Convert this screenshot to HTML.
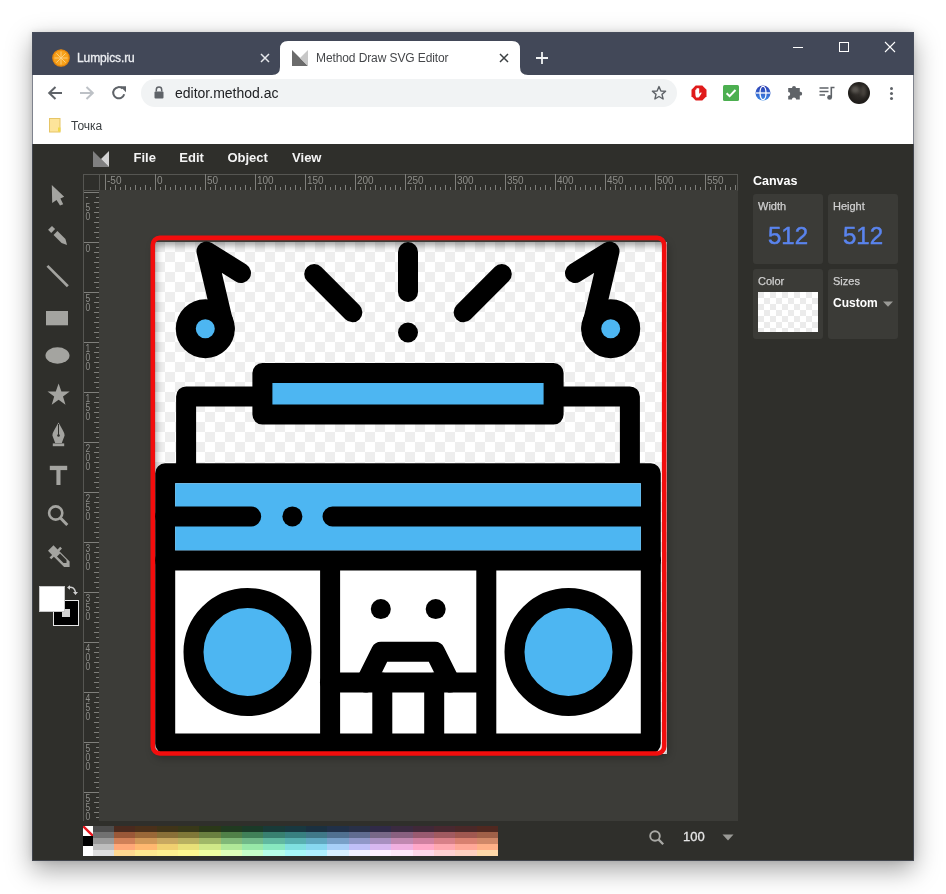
<!DOCTYPE html>
<html><head><meta charset="utf-8">
<style>
*{box-sizing:border-box;margin:0;padding:0}
html,body{width:946px;height:894px;overflow:hidden;background:#fff;will-change:transform;font-family:"Liberation Sans",sans-serif}
.a{position:absolute}
#win{left:32px;top:32px;width:882px;height:829px;background:#2f2f2b;box-shadow:0 9px 24px rgba(0,0,0,0.36),0 0 6px rgba(0,0,0,0.1)}
#title{left:32px;top:32px;width:882px;height:43px;background:#424858}
#toolbar{left:32px;top:75px;width:882px;height:69px;background:#fff}
.tt{font-size:12px;white-space:nowrap;line-height:14px}
#editor{left:33px;top:144px;width:880px;height:717px;background:#2f2f2b}
.menu{font-size:13px;font-weight:bold;color:#f4f4f4;top:151px;line-height:14px}
#work{left:99px;top:190px;width:639px;height:631px;background:#3c3c38}
.box{background:#3b3b37;border-radius:3px;width:70px;height:70px}
.lbl{font-size:11px;color:#d0d0d0;line-height:12px;-webkit-text-stroke:0.25px #d0d0d0}
.big{font-size:24px;color:#5a84ee;line-height:26px;-webkit-text-stroke:0.5px #5a84ee}
</style></head><body>
<div id="win" class="a"></div>
<div id="title" class="a"></div>
<div id="toolbar" class="a"></div>
<!-- favicon lumpics -->
<svg class="a" style="left:52px;top:49px" width="18" height="18" viewBox="0 0 18 18">
<circle cx="9" cy="9" r="8.2" fill="#f7a21b" stroke="#e8870c" stroke-width="1.2"/>
<g stroke="#fbd38a" stroke-width="0.9"><line x1="9" y1="2.5" x2="9" y2="15.5"/><line x1="2.5" y1="9" x2="15.5" y2="9"/><line x1="4.4" y1="4.4" x2="13.6" y2="13.6"/><line x1="13.6" y1="4.4" x2="4.4" y2="13.6"/></g>
</svg>
<div class="a tt" style="left:77px;top:51px;color:#eceef2;-webkit-text-stroke:0.3px #eceef2;letter-spacing:-0.1px">Lumpics.ru</div>
<svg class="a" style="left:260px;top:53px" width="10" height="10" viewBox="0 0 10 10"><path d="M1 1L9 9M9 1L1 9" stroke="#e6e8ec" stroke-width="1.5"/></svg>
<!-- active tab -->
<svg class="a" style="left:272px;top:41px" width="256" height="34" viewBox="0 0 256 34">
<path d="M0 34 Q8 34 8 26 L8 8 Q8 0 16 0 L240 0 Q248 0 248 8 L248 26 Q248 34 256 34 Z" fill="#fff"/>
</svg>
<svg class="a" style="left:292px;top:50px" width="16" height="16" viewBox="0 0 16 16">
<path d="M0 0 L16 16 L0 16 Z" fill="#6b6b6b"/><path d="M16 0 L16 16 L8 8 Z" fill="#c8c8c8"/>
</svg>
<div class="a tt" style="left:316px;top:51px;color:#45474a;letter-spacing:-0.1px">Method Draw SVG Editor</div>
<svg class="a" style="left:499px;top:53px" width="10" height="10" viewBox="0 0 10 10"><path d="M1 1L9 9M9 1L1 9" stroke="#3c4043" stroke-width="1.5"/></svg>
<svg class="a" style="left:535px;top:51px" width="14" height="14" viewBox="0 0 14 14"><path d="M7 1V13M1 7H13" stroke="#f1f3f4" stroke-width="1.8"/></svg>

<!-- nav -->
<svg class="a" style="left:47px;top:85px" width="16" height="16" viewBox="0 0 16 16"><path d="M15 8H2.5M8.5 2L2.2 8L8.5 14" fill="none" stroke="#5f6368" stroke-width="2"/></svg>
<svg class="a" style="left:79px;top:85px" width="16" height="16" viewBox="0 0 16 16"><path d="M1 8H13.5M7.5 2L13.8 8L7.5 14" fill="none" stroke="#bdc1c6" stroke-width="2"/></svg>
<svg class="a" style="left:111px;top:85px" width="16" height="16" viewBox="0 0 16 16"><path d="M13.2 9.2A5.6 5.6 0 1 1 11.6 3.6" fill="none" stroke="#5f6368" stroke-width="2"/><path d="M9 1.2H15V7.2Z" fill="#5f6368"/></svg>
<div class="a" style="left:141px;top:79px;width:536px;height:28px;border-radius:14px;background:#f1f3f4"></div>
<svg class="a" style="left:154px;top:86px" width="10" height="13" viewBox="0 0 10 13"><path d="M2.3 5.5V3.8A2.7 2.7 0 0 1 7.7 3.8V5.5" fill="none" stroke="#5f6368" stroke-width="1.5"/><rect x="0.5" y="5.5" width="9" height="7" rx="1" fill="#5f6368"/></svg>
<div class="a" style="left:175px;top:85px;font-size:14px;line-height:16px;color:#202124">editor.method.ac</div>
<svg class="a" style="left:651px;top:85px" width="16" height="16" viewBox="0 0 16 16"><path d="M8 1.6L9.9 6L14.6 6.3L11 9.4L12.1 14L8 11.5L3.9 14L5 9.4L1.4 6.3L6.1 6Z" fill="none" stroke="#5f6368" stroke-width="1.4" stroke-linejoin="round"/></svg>
<!-- extensions -->
<svg class="a" style="left:691px;top:85px" width="16" height="16" viewBox="0 0 16 16"><path d="M4.7 0.5H11.3L15.5 4.7V11.3L11.3 15.5H4.7L0.5 11.3V4.7Z" fill="#e01b1b"/><path d="M5.2 12.5C4.6 11.5 4.3 9.5 4.3 7.5V5.2C4.3 4.6 5.2 4.6 5.2 5.2V7.3V3.9C5.2 3.3 6.2 3.3 6.2 3.9V7V3.4C6.2 2.8 7.2 2.8 7.2 3.4V7V3.8C7.2 3.2 8.2 3.2 8.2 3.8V8.8L9.6 7.6C10.2 7.1 10.9 7.7 10.5 8.3L8.9 11C8.4 11.9 7.9 12.5 7 12.5Z" fill="#fff"/></svg>
<div class="a" style="left:723px;top:85px;width:16px;height:16px;background:#4caf50;border-radius:1.5px"></div>
<svg class="a" style="left:723px;top:85px" width="16" height="16" viewBox="0 0 16 16"><path d="M3.6 8.2L6.6 11.1L12.5 5" fill="none" stroke="#fff" stroke-width="2"/></svg>
<svg class="a" style="left:755px;top:85px" width="16" height="16" viewBox="0 0 16 16"><defs><linearGradient id="gg" x1="0" y1="0" x2="0" y2="1"><stop offset="0" stop-color="#2a3bb0"/><stop offset="1" stop-color="#3f8be8"/></linearGradient></defs><circle cx="8" cy="8" r="7.5" fill="url(#gg)"/><g fill="none" stroke="#fff" stroke-width="1.3"><ellipse cx="8" cy="8" rx="3" ry="6.6"/><path d="M1 8H15"/></g></svg>
<svg class="a" style="left:787px;top:85px" width="16" height="16" viewBox="0 0 16 16"><path d="M1.2 3.1H5A2 2 0 1 1 9 3.1H12.8V6.8A1.9 1.9 0 1 1 12.8 10.5V14.5H9.1A2.1 2.1 0 0 0 4.9 14.5H1.2V10.9A2 2 0 0 0 1.2 6.9Z" fill="#5f6368"/></svg>
<svg class="a" style="left:819px;top:85px" width="16" height="16" viewBox="0 0 16 16"><g stroke="#5f6368" stroke-width="1.6" fill="none"><path d="M0.5 3H9.5M0.5 6.5H9.5M0.5 10H6"/><path d="M12.3 12.5V2.5H15.5"/></g><circle cx="10.6" cy="12.4" r="2.4" fill="#5f6368"/></svg>
<div class="a" style="left:848px;top:82px;width:22px;height:22px;border-radius:50%;overflow:hidden;background:radial-gradient(circle at 50% 45%,#3a3632 0%,#221f1c 60%,#100f0e 100%)"><div style="position:absolute;left:3px;top:4px;width:8px;height:7px;border-radius:50%;background:#6e6a64;opacity:0.7;filter:blur(1.5px)"></div><div style="position:absolute;left:13px;top:3px;width:5px;height:12px;border-radius:50%;background:#55504a;opacity:0.7;filter:blur(1.5px)"></div></div>
<div class="a" style="left:889.5px;top:86.5px;width:3.6px;height:3.6px;border-radius:50%;background:#5f6368;box-shadow:0 5px 0 #5f6368,0 10px 0 #5f6368"></div>
<!-- bookmarks -->
<svg class="a" style="left:48px;top:117px" width="14" height="16" viewBox="0 0 14 16"><rect x="1.5" y="1.5" width="10.5" height="13.5" fill="#fde49a" stroke="#e6c566" stroke-width="1"/><rect x="10" y="10.5" width="2.5" height="4" fill="#f0d84a"/></svg>
<div class="a tt" style="left:71px;top:119px;color:#3c4043">Точка</div>
<!-- window controls -->
<div class="a" style="left:793px;top:47px;width:10px;height:1px;background:#fff"></div>
<div class="a" style="left:839px;top:42px;width:10px;height:10px;border:1px solid #fff"></div>
<svg class="a" style="left:884px;top:41px" width="12" height="12" viewBox="0 0 12 12"><path d="M1 1L11 11M11 1L1 11" stroke="#fff" stroke-width="1.1"/></svg>

<div id="editor" class="a"></div>
<div id="work" class="a"></div>
<!--EDITOR-->
<svg class="a" style="left:93px;top:151px" width="16" height="16" viewBox="0 0 16 16"><path d="M0 0L16 16H0Z" fill="#808080"/><path d="M16 0V16L8 8Z" fill="#d2d2d2"/></svg>
<div class="a menu" style="left:133.5px">File</div>
<div class="a menu" style="left:179.3px">Edit</div>
<div class="a menu" style="left:227.4px">Object</div>
<div class="a menu" style="left:292.1px">View</div>
<svg class="a" style="left:83px;top:174px" width="655" height="18" viewBox="0 0 655 18"><g stroke="#565652" stroke-width="1" fill="none"><path d="M0 0.5H655M0.5 0V18M16.5 0V16.5M654.5 0V16.5M1 16.5H16"/></g><g stroke="#7e7e7a" stroke-width="1"><path d="M22.5 0V16 M72.5 0V16 M122.5 0V16 M172.5 0V16 M222.5 0V16 M272.5 0V16 M322.5 0V16 M372.5 0V16 M422.5 0V16 M472.5 0V16 M522.5 0V16 M572.5 0V16 M622.5 0V16 M27.5 13V16 M32.5 11V16 M37.5 13V16 M42.5 11V16 M47.5 13V16 M52.5 11V16 M57.5 13V16 M62.5 11V16 M67.5 13V16 M77.5 13V16 M82.5 11V16 M87.5 13V16 M92.5 11V16 M97.5 13V16 M102.5 11V16 M107.5 13V16 M112.5 11V16 M117.5 13V16 M127.5 13V16 M132.5 11V16 M137.5 13V16 M142.5 11V16 M147.5 13V16 M152.5 11V16 M157.5 13V16 M162.5 11V16 M167.5 13V16 M177.5 13V16 M182.5 11V16 M187.5 13V16 M192.5 11V16 M197.5 13V16 M202.5 11V16 M207.5 13V16 M212.5 11V16 M217.5 13V16 M227.5 13V16 M232.5 11V16 M237.5 13V16 M242.5 11V16 M247.5 13V16 M252.5 11V16 M257.5 13V16 M262.5 11V16 M267.5 13V16 M277.5 13V16 M282.5 11V16 M287.5 13V16 M292.5 11V16 M297.5 13V16 M302.5 11V16 M307.5 13V16 M312.5 11V16 M317.5 13V16 M327.5 13V16 M332.5 11V16 M337.5 13V16 M342.5 11V16 M347.5 13V16 M352.5 11V16 M357.5 13V16 M362.5 11V16 M367.5 13V16 M377.5 13V16 M382.5 11V16 M387.5 13V16 M392.5 11V16 M397.5 13V16 M402.5 11V16 M407.5 13V16 M412.5 11V16 M417.5 13V16 M427.5 13V16 M432.5 11V16 M437.5 13V16 M442.5 11V16 M447.5 13V16 M452.5 11V16 M457.5 13V16 M462.5 11V16 M467.5 13V16 M477.5 13V16 M482.5 11V16 M487.5 13V16 M492.5 11V16 M497.5 13V16 M502.5 11V16 M507.5 13V16 M512.5 11V16 M517.5 13V16 M527.5 13V16 M532.5 11V16 M537.5 13V16 M542.5 11V16 M547.5 13V16 M552.5 11V16 M557.5 13V16 M562.5 11V16 M567.5 13V16 M577.5 13V16 M582.5 11V16 M587.5 13V16 M592.5 11V16 M597.5 13V16 M602.5 11V16 M607.5 13V16 M612.5 11V16 M617.5 13V16 M627.5 13V16 M632.5 11V16 M637.5 13V16 M642.5 11V16 M647.5 13V16 M652.5 11V16"/></g><g fill="#8e8e8a" font-size="10" font-family="Liberation Sans"><text x="24.0" y="9.6">-50</text><text x="74.0" y="9.6">0</text><text x="124.0" y="9.6">50</text><text x="174.0" y="9.6">100</text><text x="224.0" y="9.6">150</text><text x="274.0" y="9.6">200</text><text x="324.0" y="9.6">250</text><text x="374.0" y="9.6">300</text><text x="424.0" y="9.6">350</text><text x="474.0" y="9.6">400</text><text x="524.0" y="9.6">450</text><text x="574.0" y="9.6">500</text><text x="624.0" y="9.6">550</text></g></svg>
<svg class="a" style="left:83px;top:190px" width="17" height="631" viewBox="0 0 17 631"><g stroke="#565652" stroke-width="1" fill="none"><path d="M0.5 0V631"/></g><g stroke="#7e7e7a" stroke-width="1"><path d="M1 2.5H16 M1 52.5H16 M1 102.5H16 M1 152.5H16 M1 202.5H16 M1 252.5H16 M1 302.5H16 M1 352.5H16 M1 402.5H16 M1 452.5H16 M1 502.5H16 M1 552.5H16 M1 602.5H16 M13 7.5H16 M11 12.5H16 M13 17.5H16 M11 22.5H16 M13 27.5H16 M11 32.5H16 M13 37.5H16 M11 42.5H16 M13 47.5H16 M13 57.5H16 M11 62.5H16 M13 67.5H16 M11 72.5H16 M13 77.5H16 M11 82.5H16 M13 87.5H16 M11 92.5H16 M13 97.5H16 M13 107.5H16 M11 112.5H16 M13 117.5H16 M11 122.5H16 M13 127.5H16 M11 132.5H16 M13 137.5H16 M11 142.5H16 M13 147.5H16 M13 157.5H16 M11 162.5H16 M13 167.5H16 M11 172.5H16 M13 177.5H16 M11 182.5H16 M13 187.5H16 M11 192.5H16 M13 197.5H16 M13 207.5H16 M11 212.5H16 M13 217.5H16 M11 222.5H16 M13 227.5H16 M11 232.5H16 M13 237.5H16 M11 242.5H16 M13 247.5H16 M13 257.5H16 M11 262.5H16 M13 267.5H16 M11 272.5H16 M13 277.5H16 M11 282.5H16 M13 287.5H16 M11 292.5H16 M13 297.5H16 M13 307.5H16 M11 312.5H16 M13 317.5H16 M11 322.5H16 M13 327.5H16 M11 332.5H16 M13 337.5H16 M11 342.5H16 M13 347.5H16 M13 357.5H16 M11 362.5H16 M13 367.5H16 M11 372.5H16 M13 377.5H16 M11 382.5H16 M13 387.5H16 M11 392.5H16 M13 397.5H16 M13 407.5H16 M11 412.5H16 M13 417.5H16 M11 422.5H16 M13 427.5H16 M11 432.5H16 M13 437.5H16 M11 442.5H16 M13 447.5H16 M13 457.5H16 M11 462.5H16 M13 467.5H16 M11 472.5H16 M13 477.5H16 M11 482.5H16 M13 487.5H16 M11 492.5H16 M13 497.5H16 M13 507.5H16 M11 512.5H16 M13 517.5H16 M11 522.5H16 M13 527.5H16 M11 532.5H16 M13 537.5H16 M11 542.5H16 M13 547.5H16 M13 557.5H16 M11 562.5H16 M13 567.5H16 M11 572.5H16 M13 577.5H16 M11 582.5H16 M13 587.5H16 M11 592.5H16 M13 597.5H16 M13 607.5H16 M11 612.5H16 M13 617.5H16 M11 622.5H16 M13 627.5H16"/></g><g fill="#8e8e8a" font-size="10" font-family="Liberation Sans"><text transform="translate(2.6 9.5) scale(0.85 1)">-</text><text transform="translate(2.6 20.7) scale(0.85 1)">5</text><text transform="translate(2.6 29.7) scale(0.85 1)">0</text><text transform="translate(2.6 61.7) scale(0.85 1)">0</text><text transform="translate(2.6 111.7) scale(0.85 1)">5</text><text transform="translate(2.6 120.7) scale(0.85 1)">0</text><text transform="translate(2.6 161.7) scale(0.85 1)">1</text><text transform="translate(2.6 170.7) scale(0.85 1)">0</text><text transform="translate(2.6 179.7) scale(0.85 1)">0</text><text transform="translate(2.6 211.7) scale(0.85 1)">1</text><text transform="translate(2.6 220.7) scale(0.85 1)">5</text><text transform="translate(2.6 229.7) scale(0.85 1)">0</text><text transform="translate(2.6 261.7) scale(0.85 1)">2</text><text transform="translate(2.6 270.7) scale(0.85 1)">0</text><text transform="translate(2.6 279.7) scale(0.85 1)">0</text><text transform="translate(2.6 311.7) scale(0.85 1)">2</text><text transform="translate(2.6 320.7) scale(0.85 1)">5</text><text transform="translate(2.6 329.7) scale(0.85 1)">0</text><text transform="translate(2.6 361.7) scale(0.85 1)">3</text><text transform="translate(2.6 370.7) scale(0.85 1)">0</text><text transform="translate(2.6 379.7) scale(0.85 1)">0</text><text transform="translate(2.6 411.7) scale(0.85 1)">3</text><text transform="translate(2.6 420.7) scale(0.85 1)">5</text><text transform="translate(2.6 429.7) scale(0.85 1)">0</text><text transform="translate(2.6 461.7) scale(0.85 1)">4</text><text transform="translate(2.6 470.7) scale(0.85 1)">0</text><text transform="translate(2.6 479.7) scale(0.85 1)">0</text><text transform="translate(2.6 511.7) scale(0.85 1)">4</text><text transform="translate(2.6 520.7) scale(0.85 1)">5</text><text transform="translate(2.6 529.7) scale(0.85 1)">0</text><text transform="translate(2.6 561.7) scale(0.85 1)">5</text><text transform="translate(2.6 570.7) scale(0.85 1)">0</text><text transform="translate(2.6 579.7) scale(0.85 1)">0</text><text transform="translate(2.6 611.7) scale(0.85 1)">5</text><text transform="translate(2.6 620.7) scale(0.85 1)">5</text><text transform="translate(2.6 629.7) scale(0.85 1)">0</text></g></svg>
<!-- tools -->
<svg class="a" style="left:40px;top:180px" width="36" height="420" viewBox="40 180 36 420">
<g fill="#a4a4a0">
<path d="M51.8 185.1L52.2 203.1L56.5 199.9L60 205.4L63.2 204.2L60.4 198.4L64.2 196.8Z"/>
<path d="M55.1 229L51.2 232.9L48.1 229.8L52 225.9Z"/>
<path d="M57.44 231.06L65.44 239.06L67.06 244.9L61.56 242.94L53.56 234.94Z"/>
<path d="M46.5 266.8L48.4 264.9L68.8 285.3L66.9 287.2Z"/>
<rect x="46" y="311" width="22" height="14.3"/>
<ellipse cx="57.5" cy="355.5" rx="12" ry="8.3"/>
<path d="M58.6 383.6L61.4 391.5H69.7L63 396.5L65.5 404.8L58.6 399.8L51.7 404.8L54.2 396.5L47.5 391.5H55.8Z"/>
<path d="M58.5 422.4L61 427C63 430.5 64.6 433 64.6 435.5L61.8 443H55.2L52.4 435.5C52.4 433 54 430.5 56 427Z"/>
<rect x="52.8" y="443.4" width="11.4" height="2.8"/>
<rect x="49.8" y="465.8" width="17.4" height="4.3"/>
<rect x="56.4" y="468" width="4.1" height="17"/>
</g>
<path d="M58.5 424V435" stroke="#2f2f2b" stroke-width="1"/>
<circle cx="58.5" cy="435.5" r="1.3" fill="#2f2f2b"/>
<g fill="none" stroke="#a4a4a0">
<circle cx="55.7" cy="513" r="6.6" stroke-width="2.6"/>
<path d="M60.5 518L67.3 525" stroke-width="3"/>
</g>
<g fill="#a4a4a0">
<path d="M49.5 549.3L53.5 545.3L57.6 549.4L60.2 546.8L62 548.6L59.4 551.2L69.6 561.4V566.9H64.1L53.9 556.7L51.3 559.3L49.5 557.5L52.1 554.9L48 550.8Z"/>
</g>
<path d="M57 556.5L63.5 563H66.5V560L60 553.5" fill="#2f2f2b"/>
</svg>
<!-- swatches -->
<div class="a" style="left:53px;top:600px;width:26px;height:26px;background:#000;border:1.5px solid #e8e8e8"></div>
<div class="a" style="left:62px;top:609px;width:8px;height:8px;background:#d4d4d4"></div>
<div class="a" style="left:39px;top:586px;width:26px;height:26px;background:#fff;border:1px solid #c8c8c8"></div>
<svg class="a" style="left:66px;top:584px" width="13" height="12" viewBox="0 0 13 12"><path d="M2.5 3.5Q8 2 9.5 8" fill="none" stroke="#cfcfcf" stroke-width="1.4"/><path d="M1 3.5L4 1.2V5.8Z M7 8H12L9.5 11Z" fill="#cfcfcf"/></svg>

<!-- canvas -->
<div class="a" style="left:152px;top:239px;width:514px;height:516px;border-radius:8px;box-shadow:2px 3px 9px rgba(0,0,0,0.28)"></div>
<div class="a" style="left:155px;top:242px;width:512px;height:512px;background-color:#fff;background-image:linear-gradient(45deg,#eeeeee 25%,transparent 25%,transparent 75%,#eeeeee 75%),linear-gradient(45deg,#eeeeee 25%,transparent 25%,transparent 75%,#eeeeee 75%);background-size:20px 20px;background-position:10px 0,20px 10px"></div>
<div class="a" style="left:155px;top:242px;width:512px;height:512px;box-shadow:inset 1px 3px 7px rgba(0,0,0,0.4)"></div>
<svg class="a" style="left:155px;top:242px;overflow:visible" width="512" height="512" viewBox="0 0 512 512">
<g fill="none" stroke="#000" stroke-width="20" stroke-linecap="round" stroke-linejoin="round">
<path d="M86 31L51.5 9.4L69.7 86.7"/>
<path d="M420 31L454.5 9.4L436.3 86.7"/>
<path d="M159.2 32L197.4 70.3"/>
<path d="M346.8 32L308.6 70.3"/>
<path d="M253 10V50"/>
<path d="M31.1 231V154.4H107.4M474.9 231V154.4H398.6"/>
</g>
<circle cx="253" cy="90.5" r="10" fill="#000"/>
<g stroke="#000" stroke-width="20" stroke-linejoin="round">
<circle cx="50.3" cy="86.7" r="19.5" fill="#4db6f2"/>
<circle cx="455.7" cy="86.7" r="19.5" fill="#4db6f2"/>
<rect x="107.4" y="131" width="291.2" height="41.6" fill="#4db6f2"/>
<rect x="10.2" y="231.3" width="485.6" height="270.3" fill="#fff"/>
</g>
<rect x="20.2" y="241.3" width="465.6" height="67.4" fill="#4db6f2"/>
<g fill="none" stroke="#000" stroke-width="20" stroke-linecap="round" stroke-linejoin="round">
<path d="M10 318.6H496"/>
<path d="M10 274.5H96.2M177.5 274.5H490"/>
<path d="M175.1 328V499M331.3 328V499"/>
<path d="M175 440.5H331"/>
<path d="M227.3 440.5V499M279.2 440.5V499"/>
<path d="M210.7 440.5L226 409.8H280L295.3 440.5"/>
</g>
<path d="M486 264.5H496V284.5H486Z" fill="#000"/>
<g fill="#000"><circle cx="137.4" cy="274.4" r="10"/><circle cx="225.8" cy="367.1" r="10"/><circle cx="280.7" cy="367.1" r="10"/></g>
<g stroke="#000" stroke-width="20" fill="#4db6f2">
<circle cx="92.5" cy="410" r="54"/>
<circle cx="413.5" cy="410" r="54"/>
</g>
</svg>
<svg class="a" style="left:148px;top:233px" width="522" height="526" viewBox="148 233 522 526"><rect x="152.8" y="237.9" width="511.4" height="515.6" rx="7" fill="none" stroke="#f20d0d" stroke-width="4.6"/></svg>

<div class="a" style="left:753px;top:174px;font-size:12.5px;font-weight:bold;color:#fff;line-height:14px">Canvas</div>
<div class="a box" style="left:753px;top:194px"></div>
<div class="a box" style="left:828px;top:194px"></div>
<div class="a box" style="left:753px;top:269px"></div>
<div class="a box" style="left:828px;top:269px"></div>
<div class="a lbl" style="left:758px;top:200px">Width</div>
<div class="a lbl" style="left:833px;top:200px">Height</div>
<div class="a lbl" style="left:758px;top:275px">Color</div>
<div class="a lbl" style="left:833px;top:275px">Sizes</div>
<div class="a big" style="left:768px;top:223px">512</div>
<div class="a big" style="left:843px;top:223px">512</div>
<div class="a" style="left:758px;top:292px;width:60px;height:40px;background-color:#fff;background-image:linear-gradient(45deg,#ebebeb 25%,transparent 25%,transparent 75%,#ebebeb 75%),linear-gradient(45deg,#ebebeb 25%,transparent 25%,transparent 75%,#ebebeb 75%);background-size:12px 12px;background-position:6px 0,12px 6px"></div>
<div class="a" style="left:833px;top:296px;font-size:12px;font-weight:bold;color:#fff;line-height:14px">Custom</div>
<svg class="a" style="left:883px;top:301px" width="10" height="6" viewBox="0 0 10 6"><path d="M0 0.5H10L5 5.8Z" fill="#9a9a96"/></svg>
<svg class="a" style="left:648px;top:829px" width="17" height="17" viewBox="0 0 17 17"><circle cx="7" cy="7" r="4.8" fill="none" stroke="#a9a9a5" stroke-width="1.9"/><path d="M10.4 10.4L15.2 15.2" stroke="#a9a9a5" stroke-width="2.3"/></svg>
<div class="a" style="left:683px;top:830px;font-size:13px;color:#e6e6e6;line-height:14px;-webkit-text-stroke:0.3px #e6e6e6">100</div>
<svg class="a" style="left:722px;top:834px" width="12" height="7" viewBox="0 0 12 7"><path d="M0.5 0.5H11.5L6 6.5Z" fill="#9a9a96"/></svg>
<div class="a" style="left:83px;top:826px;width:10px;height:10px;background:#fff;overflow:hidden"><svg style="display:block" width="10" height="10" viewBox="0 0 10 10"><path d="M-1 -1L11 11" stroke="#e8141c" stroke-width="2.4"/></svg></div>
<div class="a" style="left:83px;top:836px;width:10px;height:10px;background:#000"></div>
<div class="a" style="left:83px;top:846px;width:10px;height:10px;background:#fff"></div>
<div class="a" style="left:93px;top:826px;width:21px;height:6px;background:#4c4c4c"></div>
<div class="a" style="left:93px;top:832px;width:21px;height:6px;background:#717171"></div>
<div class="a" style="left:93px;top:838px;width:21px;height:6px;background:#999999"></div>
<div class="a" style="left:93px;top:844px;width:21px;height:6px;background:#bdbdbd"></div>
<div class="a" style="left:93px;top:850px;width:21px;height:6px;background:#dedede"></div>
<div class="a" style="left:114px;top:826px;width:384px;height:6px;background:linear-gradient(90deg,#4a2a1e 0.00% 5.56%,#4a301a 5.56% 11.11%,#403418 11.11% 16.67%,#383818 16.67% 22.22%,#2a3818 22.22% 27.78%,#203a20 27.78% 33.33%,#1a3a28 33.33% 38.89%,#183a38 38.89% 44.44%,#183840 44.44% 50.00%,#1a3040 50.00% 55.56%,#203048 55.56% 61.11%,#283048 61.11% 66.67%,#302a48 66.67% 72.22%,#3a2a40 72.22% 77.78%,#402838 77.78% 83.33%,#482830 83.33% 88.89%,#4a2828 88.89% 94.44%,#502820 94.44% 100.00%)"></div>
<div class="a" style="left:114px;top:832px;width:384px;height:6px;background:linear-gradient(90deg,#9a5838 0.00% 5.56%,#9a6838 5.56% 11.11%,#8a7038 11.11% 16.67%,#807838 16.67% 22.22%,#6a8040 22.22% 27.78%,#508048 27.78% 33.33%,#408058 33.33% 38.89%,#388070 38.89% 44.44%,#388080 44.44% 50.00%,#407888 50.00% 55.56%,#507090 55.56% 61.11%,#606c90 61.11% 66.67%,#786888 66.67% 72.22%,#886080 72.22% 77.78%,#985a70 77.78% 83.33%,#a05a60 83.33% 88.89%,#a05850 88.89% 94.44%,#a06048 94.44% 100.00%)"></div>
<div class="a" style="left:114px;top:838px;width:384px;height:6px;background:linear-gradient(90deg,#d08058 0.00% 5.56%,#d09858 5.56% 11.11%,#c8a860 11.11% 16.67%,#b8b060 16.67% 22.22%,#a0b868 22.22% 27.78%,#80b878 27.78% 33.33%,#70b888 33.33% 38.89%,#60b8a0 38.89% 44.44%,#58b0b0 44.44% 50.00%,#60a8c0 50.00% 55.56%,#78a0c8 55.56% 61.11%,#9098c8 61.11% 66.67%,#a890c0 66.67% 72.22%,#c088b0 72.22% 77.78%,#d080a0 77.78% 83.33%,#d88088 83.33% 88.89%,#d88070 88.89% 94.44%,#d08868 94.44% 100.00%)"></div>
<div class="a" style="left:114px;top:844px;width:384px;height:6px;background:linear-gradient(90deg,#ffa878 0.00% 5.56%,#ffb870 5.56% 11.11%,#f0d070 11.11% 16.67%,#e8e078 16.67% 22.22%,#d0e888 22.22% 27.78%,#b0e898 27.78% 33.33%,#98e8a8 33.33% 38.89%,#88e8c0 38.89% 44.44%,#80e0e0 44.44% 50.00%,#88d8f0 50.00% 55.56%,#a8d0f8 55.56% 61.11%,#c0c0f8 61.11% 66.67%,#d8b8f0 66.67% 72.22%,#f0b0e0 72.22% 77.78%,#ffa8c8 77.78% 83.33%,#ffa8b0 83.33% 88.89%,#ffa898 88.89% 94.44%,#ffb088 94.44% 100.00%)"></div>
<div class="a" style="left:114px;top:850px;width:384px;height:6px;background:linear-gradient(90deg,#ffd890 0.00% 5.56%,#ffe890 5.56% 11.11%,#fff090 11.11% 16.67%,#fff890 16.67% 22.22%,#f0ffa0 22.22% 27.78%,#e0ffb8 27.78% 33.33%,#c8ffc8 33.33% 38.89%,#b8ffe8 38.89% 44.44%,#a8f8f8 44.44% 50.00%,#b0f0ff 50.00% 55.56%,#d8f0ff 55.56% 61.11%,#f0f0ff 61.11% 66.67%,#fff0ff 66.67% 72.22%,#ffe8f8 72.22% 77.78%,#ffd8e8 77.78% 83.33%,#ffd0d0 83.33% 88.89%,#ffd0c0 88.89% 94.44%,#ffd8a8 94.44% 100.00%)"></div>
<!--/EDITOR-->
<div class="a" style="left:32px;top:32px;width:882px;height:829px;border:1px solid rgba(72,78,92,0.7)"></div>
</body></html>
